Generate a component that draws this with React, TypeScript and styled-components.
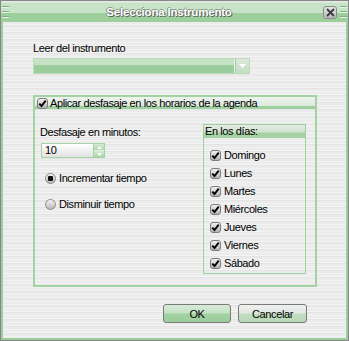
import React from "react";
import styled, { createGlobalStyle } from "styled-components";

const GlobalStyle = createGlobalStyle`
  html, body {
    margin: 0;
    padding: 0;
    background: #ffffff;
  }
  body {
    font-family: "Liberation Sans", Arial, sans-serif;
    font-size: 11px;
    letter-spacing: -0.4px;
    color: #000000;
  }
`;

const stripes = `repeating-linear-gradient(
  to bottom,
  #ececec 0px, #ececec 2px,
  #f4f4f4 2px, #f4f4f4 3px,
  #e4e4e4 3px, #e4e4e4 4px,
  #ebebeb 4px, #ebebeb 6px,
  #f2f2f2 6px, #f2f2f2 7px
)`;

const days = ["Domingo", "Lunes", "Martes", "Miércoles", "Jueves", "Viernes", "Sábado"];

const Check = ({ checked = true }: { checked?: boolean }) => (
  <CheckBox>
    {checked && (
      <svg width="11" height="11" viewBox="0 0 11 11">
        <path d="M2.3 5.6 L4.5 8 L8.7 2.6" stroke="#000" strokeWidth="1.9" fill="none" />
      </svg>
    )}
  </CheckBox>
);

const App = () => {
  return (
    <>
      <GlobalStyle />
      <Window>
        <TitleBar>
          <Grip />
          <Title>Selecciona Instrumento</Title>
          <CloseButton>
            <svg width="9" height="9" viewBox="0 0 9 9">
              <path d="M1 1 L8 8 M8 1 L1 8" stroke="#3a3a3a" strokeWidth="1.8" />
            </svg>
          </CloseButton>
          <Grip $right />
        </TitleBar>
        <Body>
          <Label>Leer del instrumento</Label>
          <Combo>
            <ComboField />
            <ComboButton>
              <svg width="7" height="4" viewBox="0 0 7 4">
                <path d="M0 0 L7 0 L3.5 4 Z" fill="#ffffff" />
              </svg>
            </ComboButton>
          </Combo>

          <Group>
            <GroupHeader>
              <Check />
              <span>Aplicar desfasaje en los horarios de la agenda</span>
            </GroupHeader>
            <GroupContent>
              <LeftColumn>
                <Label $top={2}>Desfasaje en minutos:</Label>
                <Spinner>
                  <SpinnerField>10</SpinnerField>
                  <SpinnerButtons>
                    <SpinnerButton>
                      <svg width="5" height="3" viewBox="0 0 5 3">
                        <path d="M0 3 L5 3 L2.5 0 Z" fill="#ffffff" />
                      </svg>
                    </SpinnerButton>
                    <SpinnerButton>
                      <svg width="5" height="3" viewBox="0 0 5 3">
                        <path d="M0 0 L5 0 L2.5 3 Z" fill="#ffffff" />
                      </svg>
                    </SpinnerButton>
                  </SpinnerButtons>
                </Spinner>
                <RadioRow $top={13}>
                  <Radio $selected />
                  <span>Incrementar tiempo</span>
                </RadioRow>
                <RadioRow $top={12}>
                  <Radio />
                  <span>Disminuir tiempo</span>
                </RadioRow>
              </LeftColumn>
              <DaysBox>
                <DaysHeader>En los días:</DaysHeader>
                <DaysList>
                  {days.map((d) => (
                    <DayRow key={d}>
                      <Check />
                      <span>{d}</span>
                    </DayRow>
                  ))}
                </DaysList>
              </DaysBox>
            </GroupContent>
          </Group>

          <ButtonRow>
            <Button $primary>OK</Button>
            <Button>Cancelar</Button>
          </ButtonRow>
        </Body>
      </Window>
    </>
  );
};

const Window = styled.div`
  width: 349px;
  height: 341px;
  box-sizing: border-box;
  border: 1px solid #868686;
  background: #9ccd9c;
  display: flex;
  flex-direction: column;
`;

const TitleBar = styled.div`
  height: 21px;
  flex: none;
  display: flex;
  align-items: center;
  background: linear-gradient(
    to bottom,
    #e6ece6 0px,
    #d9e2d9 2px,
    #c8e4c8 2px,
    #c8e4c8 12px,
    #9dcf9d 12px,
    #9dcf9d 100%
  );
`;

const Grip = styled.div<{ $right?: boolean }>`
  width: 7px;
  height: 17px;
  margin: 0 ${(p) => (p.$right ? "1px" : "0")} 0 ${(p) => (p.$right ? "3px" : "1px")};
  background: repeating-linear-gradient(
    to bottom,
    transparent 0px,
    transparent 3px,
    #7fae7f 3px,
    #7fae7f 4px,
    #e8f4e8 4px,
    #e8f4e8 5px
  );
`;

const Title = styled.div`
  flex: 1;
  text-align: center;
  padding: 1px 0 0 6px;
  color: #ffffff;
  font-size: 11.5px;
  font-weight: bold;
  letter-spacing: -0.2px;
  text-shadow: 1px 1px 0 #5d6a5d, -1px 0 0 #7a887a, 0 -1px 0 #8a988a;
`;

const CloseButton = styled.div`
  width: 14px;
  height: 13px;
  margin-top: 1px;
  box-sizing: border-box;
  border: 1px solid #8a8a8a;
  border-radius: 3px;
  background: linear-gradient(to bottom, #e4e4e4, #b8b8b8);
  display: flex;
  align-items: center;
  justify-content: center;
`;

const Body = styled.div`
  flex: 1;
  margin: 0 2px 2px;
  padding: 20px 29px 0 30px;
  background: ${stripes};
  display: flex;
  flex-direction: column;
`;

const Label = styled.div<{ $top?: number }>`
  height: 13px;
  line-height: 13px;
  margin-top: ${(p) => p.$top ?? 0}px;
  white-space: nowrap;
`;

const Combo = styled.div`
  margin-top: 3px;
  width: 217px;
  height: 16px;
  box-sizing: border-box;
  border: 1px solid #bcdcbc;
  display: flex;
`;

const ComboField = styled.div`
  flex: 1;
  background: linear-gradient(to bottom, #c6e3c6 0px, #c6e3c6 6px, #9ccd9c 6px);
  border-right: 1px solid #e8f2e8;
`;

const ComboButton = styled.div`
  width: 13px;
  background: linear-gradient(to bottom, #dceadc, #c2dcc2);
  border-left: 1px solid #a8cca8;
  display: flex;
  align-items: center;
  justify-content: center;
`;

const Group = styled.div`
  margin-top: 21px;
  width: 284px;
  height: 192px;
  box-sizing: border-box;
  border: 2px solid #a3d3a3;
  display: flex;
  flex-direction: column;
`;

const GroupHeader = styled.div`
  height: 12px;
  padding-left: 2px;
  display: flex;
  align-items: center;
  gap: 2px;
  line-height: 12px;
  white-space: nowrap;
  background: linear-gradient(
    to bottom,
    #eef3ee 0px,
    #dde9dd 9px,
    #9fd09f 9px,
    #9fd09f 100%
  );
`;

const CheckBox = styled.div`
  width: 11px;
  height: 11px;
  flex: none;
  box-sizing: border-box;
  border: 1px solid #7b7b7b;
  border-radius: 3px;
  background: linear-gradient(to bottom, #f0f0f0, #b4b4b4);
  display: flex;
  align-items: center;
  justify-content: center;

  svg {
    margin: -1px;
  }
`;

const GroupContent = styled.div`
  flex: 1;
  display: flex;
  align-items: flex-start;
  padding: 15px 9px 0 5px;
`;

const LeftColumn = styled.div`
  flex: 1;
  display: flex;
  flex-direction: column;
`;

const Spinner = styled.div`
  margin: 4px 0 0 1px;
  width: 64px;
  height: 15px;
  box-sizing: border-box;
  border: 1px solid #a6d2a6;
  display: flex;
`;

const SpinnerField = styled.div`
  flex: 1;
  padding-left: 3px;
  line-height: 13px;
  background: linear-gradient(to bottom, #ffffff, #e2e2e2);
`;

const SpinnerButtons = styled.div`
  width: 10px;
  display: flex;
  flex-direction: column;
  border-left: 1px solid #a6d2a6;
`;

const SpinnerButton = styled.div`
  flex: 1;
  background: linear-gradient(to bottom, #d6ead6, #a9d5a9);
  display: flex;
  align-items: center;
  justify-content: center;

  & + & {
    border-top: 1px solid #e8f2e8;
  }
`;

const RadioRow = styled.div<{ $top: number }>`
  margin-top: ${(p) => p.$top}px;
  height: 14px;
  padding-left: 5px;
  display: flex;
  align-items: center;
  gap: 3px;
  white-space: nowrap;
`;

const Radio = styled.div<{ $selected?: boolean }>`
  width: 11px;
  height: 11px;
  flex: none;
  box-sizing: border-box;
  border: 1px solid #8a8a8a;
  border-radius: 50%;
  background: linear-gradient(to bottom, #f2f2f2, #b8b8b8);
  display: flex;
  align-items: center;
  justify-content: center;

  &::after {
    content: "";
    width: 5px;
    height: 5px;
    border-radius: 1px;
    background: ${(p) => (p.$selected ? "#111111" : "transparent")};
  }
`;

const DaysBox = styled.div`
  width: 103px;
  height: 150px;
  box-sizing: border-box;
  border: 1px solid #9fd09f;
  display: flex;
  flex-direction: column;
`;

const DaysHeader = styled.div`
  height: 13px;
  line-height: 12px;
  padding-left: 1px;
  background: linear-gradient(
    to bottom,
    #e6ece6 0px,
    #cfe3cf 7px,
    #a6d3a6 8px,
    #a6d3a6 100%
  );
`;

const DaysList = styled.div`
  padding: 8px 0 0 6px;
  display: flex;
  flex-direction: column;
`;

const DayRow = styled.div`
  height: 18px;
  display: flex;
  align-items: center;
  gap: 3px;
  white-space: nowrap;
`;

const ButtonRow = styled.div`
  margin-top: 17px;
  padding-right: 10px;
  display: flex;
  justify-content: flex-end;
  gap: 7px;
`;

const Button = styled.div<{ $primary?: boolean }>`
  width: ${(p) => (p.$primary ? 68 : 69)}px;
  height: 19px;
  box-sizing: border-box;
  border: 1px solid #7a7a7a;
  border-radius: 3px;
  display: flex;
  align-items: center;
  justify-content: center;
  background: ${(p) =>
    p.$primary
      ? "linear-gradient(to bottom, #d8ead8 0px, #c4e2c4 8px, #a2d1a2 9px, #9ccd9c 100%)"
      : "linear-gradient(to bottom, #f0f0f0 0px, #e2e8e2 8px, #c2dec2 9px, #b6d8b6 100%)"};
`;

export default App;
